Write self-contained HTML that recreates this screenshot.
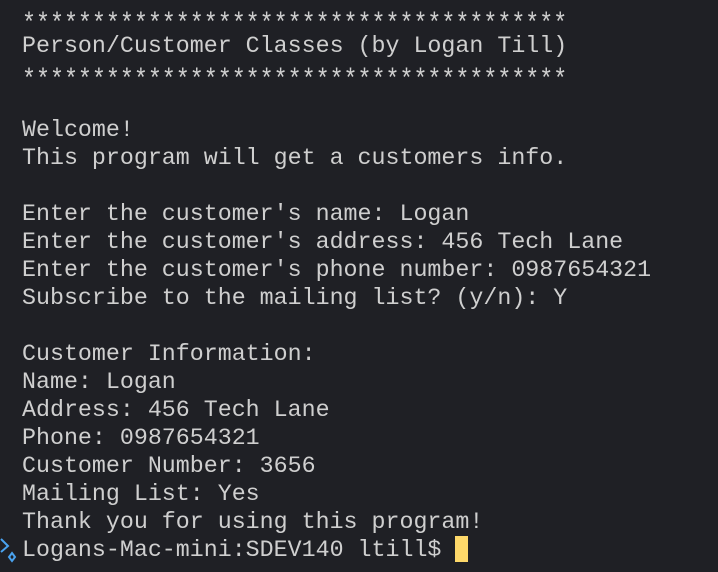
<!DOCTYPE html>
<html><head><meta charset="utf-8"><style>
html,body{margin:0;padding:0;background:#1f2025;width:718px;height:572px;overflow:hidden}
pre{position:absolute;left:22px;top:4px;margin:0;font-family:"Liberation Mono",monospace;font-size:23.3px;line-height:28px;color:#cfcfcf;white-space:pre}
.st{display:inline-block;transform:translateY(6px) scaleY(1.15)}
.cur{display:inline-block;width:13px;height:26px;background:#fdd86a;vertical-align:-6px}
svg{position:absolute;left:0;top:536px}
</style></head><body>
<svg width="22" height="30" viewBox="0 0 22 30"><path d="M1 3 L8 10 L1 16" fill="none" stroke="#4aa3f0" stroke-width="2"/><path d="M12 17 L15 21 L12 25 L9 21 Z" fill="none" stroke="#4aa3f0" stroke-width="2"/></svg>
<pre><span class="st">***************************************</span>
Person/Customer Classes (by Logan Till)
<span class="st">***************************************</span>

Welcome!
This program will get a customers info.

Enter the customer's name: Logan
Enter the customer's address: 456 Tech Lane
Enter the customer's phone number: 0987654321
Subscribe to the mailing list? (y/n): Y

Customer Information:
Name: Logan
Address: 456 Tech Lane
Phone: 0987654321
Customer Number: 3656
Mailing List: Yes
Thank you for using this program!
Logans-Mac-mini:SDEV140 ltill$ <span class="cur"></span></pre>
</body></html>
